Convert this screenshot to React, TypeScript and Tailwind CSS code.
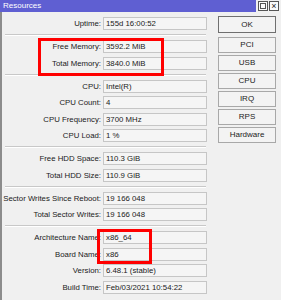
const SECTIONS: [string, string][][] = [
  [['Uptime', '155d 16:00:52']],
  [
    ['Free Memory', '3592.2 MiB'],
    ['Total Memory', '3840.0 MiB'],
  ],
  [
    ['CPU', 'Intel(R)'],
    ['CPU Count', '4'],
    ['CPU Frequency', '3700 MHz'],
    ['CPU Load', '1 %'],
  ],
  [
    ['Free HDD Space', '110.3 GiB'],
    ['Total HDD Size', '110.9 GiB'],
  ],
  [
    ['Sector Writes Since Reboot', '19 166 048'],
    ['Total Sector Writes', '19 166 048'],
  ],
  [
    ['Architecture Name', 'x86_64'],
    ['Board Name', 'x86'],
    ['Version', '6.48.1 (stable)'],
    ['Build Time', 'Feb/03/2021 10:54:22'],
  ],
];

const BUTTONS = ['PCI', 'USB', 'CPU', 'IRQ', 'RPS', 'Hardware'];

function Row({ label, value }: { label: string; value: string }) {
  return (
    <div className="flex h-[13px] items-center">
      <span className="w-[99px] whitespace-nowrap text-right leading-[13px]">{label}:</span>
      <div className="ml-[2px] h-[13px] w-[104px] border border-[#c6c6c6] bg-[#f5f5f5] pl-[2px] leading-[11px] whitespace-nowrap overflow-hidden">
        {value}
      </div>
    </div>
  );
}

function Separator() {
  return (
    <div className="my-[4px] ml-[3px] w-[201px]">
      <div className="h-px bg-[#c8c8c8]" />
      <div className="h-px bg-white" />
    </div>
  );
}

export default function App() {
  return (
    <div
      className="relative h-[300px] w-[281px] overflow-hidden bg-[#f0f0f0] text-[7.8px] text-[#1a1a1a]"
      style={{ fontFamily: '"Liberation Sans", Arial, sans-serif' }}
    >
      {/* title bar */}
      <div className="flex h-[12px] items-center justify-between bg-[#5f5fd2] pl-[3px]">
        <span className="text-[8px] leading-[12px] text-white">Resources</span>
        <div className="flex h-[12px] items-center gap-[1px] bg-[#f0f0f0] pr-[2px] pl-[2px]">
          <div className="flex h-[10px] w-[10px] items-center justify-center border border-[#555] bg-[#fafafa]">
            <div className="h-[6px] w-[6px] border border-[#555]" />
          </div>
          <div className="flex h-[10px] w-[10px] items-center justify-center border border-[#555] bg-[#fafafa] text-[9px] leading-none text-[#222]">
            ×
          </div>
        </div>
      </div>

      <div className="flex h-[288px] border-l-2 border-[#8c8c8c]">
        {/* fields */}
        <div className="w-[205px] pt-[5px]">
          {SECTIONS.map((rows, i) => (
            <div key={i}>
              {i > 0 && <Separator />}
              <div className="flex flex-col gap-[3.5px]">
                {rows.map(([label, value]) => (
                  <Row key={label} label={label} value={value} />
                ))}
              </div>
            </div>
          ))}
        </div>

        {/* buttons */}
        <div className="ml-[11px] flex w-[58px] flex-col gap-[2px] pt-[4px]">
          <button className="mb-[2px] h-[17px] border border-[#6f6f6f] bg-[#f3f3f3] text-[8px] text-[#222]">
            OK
          </button>
          {BUTTONS.map((b) => (
            <button
              key={b}
              className="h-[16px] border border-[#a8a8a8] bg-[#f3f3f3] text-[8px] text-[#222]"
            >
              {b}
            </button>
          ))}
        </div>
      </div>

      {/* red annotation boxes */}
      <div className="absolute left-[38px] top-[38px] h-[38px] w-[126px] border-[3px] border-[#ff0000]" />
      <div className="absolute left-[97px] top-[229px] h-[35px] w-[55px] border-[3px] border-[#ff0000]" />
    </div>
  );
}
